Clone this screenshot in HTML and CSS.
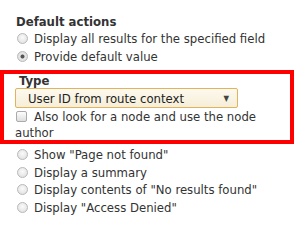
FILE: index.html
```html
<!DOCTYPE html>
<html lang="en">
<head>
    <meta charset="UTF-8">
    <title>Default actions</title>
    <link rel="stylesheet" href="styles.css">
</head>
<body>

<div class="actions">
    <div class="title">Default actions</div>
    <div class="option"><span class="radio"></span>Display all results for the specified field</div>
    <div class="option"><span class="radio checked"></span>Provide default value</div>

    <div class="highlight">
        <div class="title">Type</div>
        <div class="select">User ID from route context<span class="arrow">&#9660;</span></div>
        <div class="option wrap"><span class="checkbox"></span>Also look for a node and use the node author</div>
    </div>

    <div class="option"><span class="radio"></span>Show "Page not found"</div>
    <div class="option"><span class="radio"></span>Display a summary</div>
    <div class="option"><span class="radio"></span>Display contents of "No results found"</div>
    <div class="option"><span class="radio"></span>Display "Access Denied"</div>
</div>

</body>
</html>
```

FILE: styles.css
```css
body {
    margin: 0;
    background: white;
    font-family: "DejaVu Sans Condensed", "DejaVu Sans", Arial, sans-serif;
    font-size: 13px;
    color: #333;
}

.actions {
    padding: 13px 0 0 16px;
}

.title {
    font-weight: bold;
    line-height: 17px;
}

.option {
    line-height: 17.5px;
    white-space: nowrap;
}

.option.wrap {
    white-space: normal;
    line-height: 16px;
    margin-top: 1px;
}

.radio {
    display: inline-block;
    box-sizing: border-box;
    width: 11px;
    height: 11px;
    margin: 0 6px 0 1px;
    vertical-align: -1px;
    border: 1px solid #b8b8b8;
    border-radius: 50%;
    background: radial-gradient(circle at 50% 40%, #fafafa, #dcdcdc);
}

.radio.checked {
    background: radial-gradient(circle, #555 0, #555 1.6px, #e8e8e8 2.4px, #d8d8d8 100%);
}

.checkbox {
    display: inline-block;
    box-sizing: border-box;
    width: 11px;
    height: 11px;
    margin: 0 7px 0 1px;
    vertical-align: -1px;
    border: 1px solid #aaa;
    border-radius: 2px;
    background: linear-gradient(#fdfdfd, #dedede);
}

.highlight {
    margin: 5px 2px 2px -16px;
    border: 4px solid #f00;
    padding: 0 4px 0 11px;
    height: 66px;
}

.highlight .title {
    padding-left: 4px;
    line-height: 14px;
}

.select {
    display: flex;
    justify-content: space-between;
    align-items: center;
    box-sizing: border-box;
    width: 223px;
    height: 20px;
    padding: 0 8px 0 12px;
    border: 1px solid #e0b45c;
    border-radius: 2px;
    background: linear-gradient(#fdf9ee, #f6eed8);
    color: #222;
}

.arrow {
    font-size: 8px;
    color: #444;
}
```
